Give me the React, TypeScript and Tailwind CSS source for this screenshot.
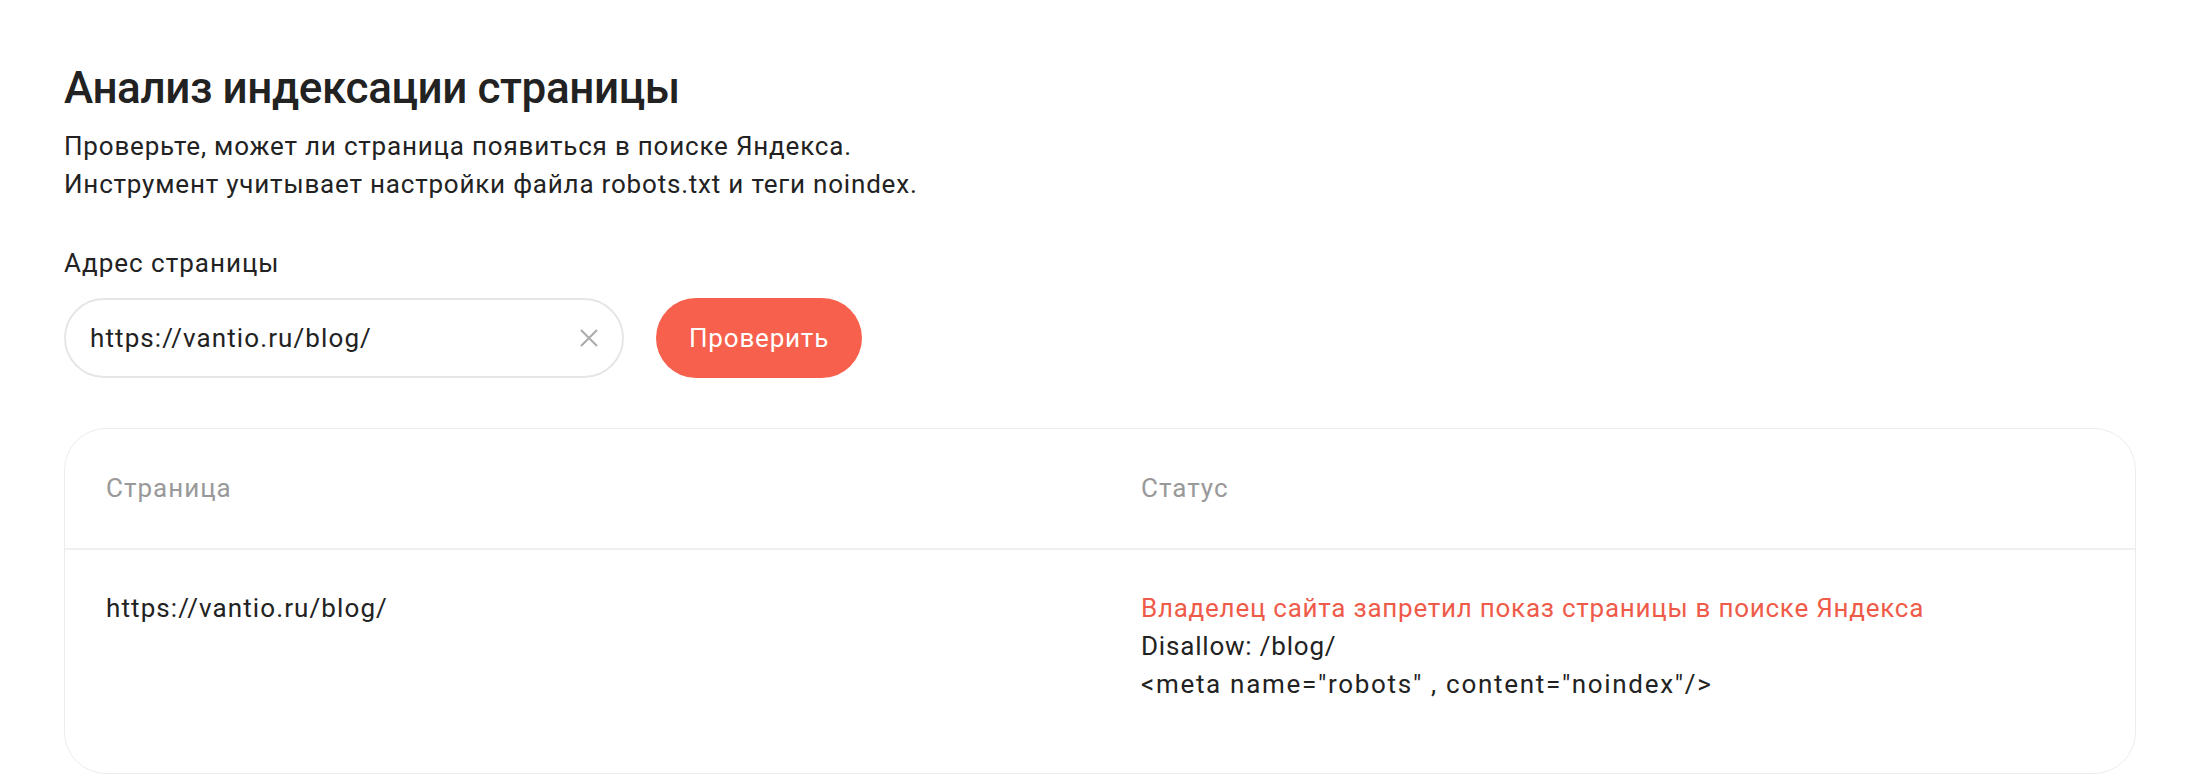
import { useState } from 'react';

const font = { fontFamily: 'Roboto, "Noto Sans", sans-serif' };

export default function App() {
    const [url, setUrl] = useState('https://vantio.ru/blog/');

    return (
        <div className="min-h-screen bg-white px-[64px] pt-[62px] text-[#222]" style={font}>
            <h1 className="text-[44px] leading-[52px] font-medium tracking-[-0.4px] text-[#222]">Анализ индексации страницы</h1>
            <p className="mt-[13px] text-[26px] leading-[38px] tracking-[0.8px] text-[#222]">
                Проверьте, может ли страница появиться в поиске Яндекса.
                <br />
                Инструмент учитывает настройки файла robots.txt и теги noindex.
            </p>

            <div className="mt-[41px] text-[26px] leading-[38px] tracking-[1px]">Адрес страницы</div>

            <div className="mt-[16px] flex items-center gap-[32px]">
                <div className="flex h-[80px] w-[560px] items-center rounded-full border-2 border-[#e6e6e6] pl-[24px] pr-[22px]">
                    <input
                        value={url}
                        onChange={(e) => setUrl(e.target.value)}
                        className="min-w-0 flex-1 bg-transparent text-[26px] tracking-[1.1px] text-[#222] outline-none"
                        style={font}
                    />
                    <button onClick={() => setUrl('')} className="ml-3 flex h-[22px] w-[22px] items-center justify-center">
                        <svg width="20" height="20" viewBox="0 0 20 20" fill="none" stroke="#ababab" strokeWidth="2">
                            <path d="M2 2 L18 18 M18 2 L2 18" />
                        </svg>
                    </button>
                </div>
                <button className="h-[80px] rounded-full bg-[#f6604c] px-[33px] text-[26px] tracking-[0.8px] text-white">Проверить</button>
            </div>

            {/* results */}
            <div className="mt-[50px] rounded-[42px] border border-[#ececec]">
                <div className="grid grid-cols-2 border-b-2 border-[#f0f0f0] text-[26px] tracking-[1px] text-[#999]">
                    <div className="flex h-[119px] items-center px-[41px]">Страница</div>
                    <div className="flex h-[119px] items-center px-[41px]">Статус</div>
                </div>
                <div className="grid grid-cols-2 pt-[39px] pb-[70px] text-[26px] leading-[38px]">
                    <div className="px-[41px] tracking-[1.1px] text-[#222]">https://vantio.ru/blog/</div>
                    <div className="px-[41px] text-[#222]">
                        <div className="tracking-[0.75px] text-[#ef5b49]">Владелец сайта запретил показ страницы в поиске Яндекса</div>
                        <div className="tracking-[0.8px]">Disallow: /blog/</div>
                        <div className="tracking-[1.7px]">{'<meta name="robots" , content="noindex"/>'}</div>
                    </div>
                </div>
            </div>
        </div>
    );
}
